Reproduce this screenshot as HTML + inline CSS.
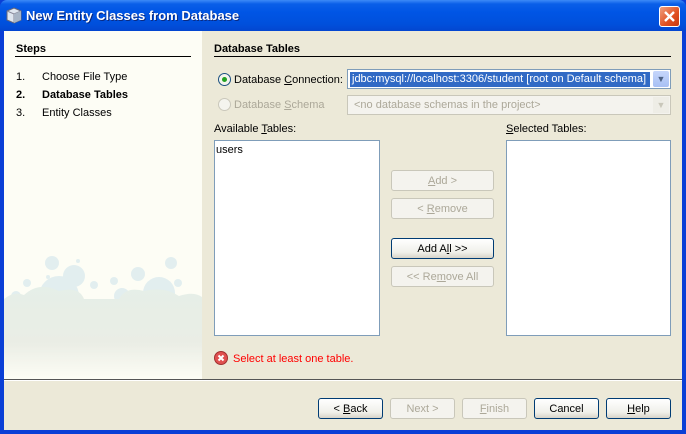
<!DOCTYPE html>
<html><head><style>
*{margin:0;padding:0;box-sizing:border-box}
body{width:686px;height:434px;overflow:hidden;font-family:"Liberation Sans",sans-serif;font-size:11px;background:#0a3fd6;position:relative}
.a{position:absolute}
#title{left:0;top:0;width:686px;height:31px;background:linear-gradient(#3d8af7 0,#0a5fe8 4px,#0055e5 12px,#0050dc 24px,#0346d0 31px);border-radius:7px 7px 0 0}
#title span{position:absolute;left:26px;top:8px;color:#fff;font-weight:bold;font-size:13px;font-family:"Liberation Sans",sans-serif;text-shadow:1px 1px #0a2a80}
#close{left:659px;top:6px;width:21px;height:21px;border:1px solid #fff;border-radius:3px;background:linear-gradient(135deg,#f0a080,#e04f20 60%,#c83810)}
#frame{left:4px;top:31px;width:678px;height:399px;background:#ece9d8}
#left{left:4px;top:31px;width:198px;height:348px;background:#fdfdf5;overflow:hidden}
.u{text-decoration:underline}
.btn{position:absolute;height:21px;border:1px solid #003c74;border-radius:3px;background:linear-gradient(#fff,#f0f0ea 70%,#d8d4c8);text-align:center;line-height:20px;color:#000}
.dis{border-color:#c9c7ba;background:#f4f3ee;color:#aca899}
.list{position:absolute;background:#fff;border:1px solid #7f9db9}
.t{margin-top:1px}
</style></head><body>
<div class="a" id="title"><svg class="a" style="left:6px;top:7px" width="16" height="17"><path d="M8 1 L15 4 L15 13 L8 16 L1 13 L1 4Z" fill="#dfe6ef" stroke="#667" stroke-width="1"/><path d="M1 4 L8 7 L15 4 M8 7 V16" fill="none" stroke="#889"/><path d="M8 7 L15 4 L15 13 L8 16Z" fill="#a8b4c4"/></svg><span>New Entity Classes from Database</span></div>
<div class="a" id="close"><svg width="19" height="19"><path d="M5 5 L14 14 M14 5 L5 14" stroke="#fff" stroke-width="2.4"/></svg></div>
<div class="a" id="frame"></div>
<div class="a" id="left">
<svg class="a" style="left:0;top:220px" width="198" height="128" opacity=".75"><defs><linearGradient id="g" x1="0" y1="0" x2="0" y2="1"><stop offset="0" stop-color="#deebe4"/><stop offset=".6" stop-color="#e4e8e0"/><stop offset="1" stop-color="#fdfdf5"/></linearGradient></defs>
<g fill="#d9eaee"><circle cx="48" cy="12" r="7"/><circle cx="70" cy="25" r="11"/><circle cx="55" cy="45" r="20"/><circle cx="23" cy="32" r="4"/><circle cx="110" cy="30" r="4"/><circle cx="134" cy="23" r="7"/><circle cx="167" cy="12" r="6"/><circle cx="155" cy="42" r="16"/><circle cx="90" cy="34" r="4"/><circle cx="174" cy="32" r="4"/><circle cx="12" cy="45" r="5"/><circle cx="118" cy="45" r="8"/><circle cx="74" cy="10" r="2"/><circle cx="44" cy="26" r="2"/></g>
<path d="M0 48 Q10 40 20 44 Q35 30 55 40 Q75 35 80 48 L115 48 Q122 35 140 40 Q160 35 175 45 Q190 40 198 46 V128 H0Z" fill="url(#g)"/></svg>
</div>
<div class="a" style="left:16px;top:43px;font-weight:bold">Steps</div>
<div class="a" style="left:15px;top:56px;width:176px;height:1px;background:#000"></div>
<div class="a" style="left:16px;top:71px">1.</div><div class="a" style="left:42px;top:71px">Choose File Type</div>
<div class="a" style="left:16px;top:89px;font-weight:bold">2.</div><div class="a" style="left:42px;top:89px;font-weight:bold">Database Tables</div>
<div class="a" style="left:16px;top:107px">3.</div><div class="a" style="left:42px;top:107px">Entity Classes</div>

<div class="a" style="left:214px;top:43px;font-weight:bold">Database Tables</div>
<div class="a" style="left:214px;top:56px;width:457px;height:1px;background:#000"></div>
<div class="a" style="left:218px;top:73px;width:13px;height:13px;border:1px solid #1c5180;border-radius:50%;background:#f4f4ee"><div class="a" style="left:3px;top:3px;width:5px;height:5px;border-radius:50%;background:#21a121"></div></div>
<div class="a" style="left:234px;top:74px">Database <span class="u">C</span>onnection:</div>
<div class="a" style="left:347px;top:69px;width:324px;height:20px;border:1px solid #7f9db9;background:#fff"><div class="a" style="left:2px;top:2px;width:300px;height:15px;background:#316ac5;color:#fff;line-height:15px;padding-left:2px;white-space:nowrap;overflow:hidden">jdbc:mysql://localhost:3306/student [root on Default schema]</div><div class="a" style="left:305px;top:1px;width:16px;height:16px;background:linear-gradient(#c6d6fb,#a8c0f4);border-radius:2px;color:#4d6185;text-align:center;font-size:9px;line-height:16px">&#9660;</div></div>
<div class="a" style="left:218px;top:98px;width:13px;height:13px;border:1px solid #cac8bb;border-radius:50%;background:#f4f4ee"></div>
<div class="a" style="left:234px;top:99px;color:#aca899">Database <span class="u">S</span>chema</div>
<div class="a" style="left:347px;top:95px;width:324px;height:20px;border:1px solid #c9c7ba;background:#f4f3ee;color:#aca899;padding:3px 0 0 6px">&lt;no database schemas in the project&gt;<div class="a" style="left:305px;top:1px;width:16px;height:16px;background:#eeede6;text-align:center;font-size:9px;line-height:16px;color:#c9c7ba">&#9660;</div></div>
<div class="a" style="left:214px;top:123px">Available <span class="u">T</span>ables:</div>
<div class="a" style="left:506px;top:123px"><span class="u">S</span>elected Tables:</div>
<div class="list" style="left:214px;top:140px;width:166px;height:196px"><div style="padding:3px 0 0 1px">users</div></div>
<div class="list" style="left:506px;top:140px;width:165px;height:196px"></div>
<div class="btn dis" style="left:391px;top:170px;width:103px"><span class="u">A</span>dd &gt;</div>
<div class="btn dis" style="left:391px;top:198px;width:103px">&lt; <span class="u">R</span>emove</div>
<div class="btn" style="left:391px;top:238px;width:103px">Add A<span class="u">l</span>l &gt;&gt;</div>
<div class="btn dis" style="left:391px;top:266px;width:103px">&lt;&lt; Re<span class="u">m</span>ove All</div>
<svg class="a" style="left:214px;top:351px" width="14" height="14"><circle cx="7" cy="7" r="6.5" fill="#e05050" stroke="#a03030"/><path d="M4.5 4.5 L9.5 9.5 M9.5 4.5 L4.5 9.5" stroke="#fff" stroke-width="2"/></svg>
<div class="a" style="left:233px;top:353px;color:#f00">Select at least one table.</div>
<div class="a" style="left:4px;top:379px;width:678px;height:1px;background:#555"></div>
<div class="a" style="left:4px;top:380px;width:678px;height:1px;background:#fff"></div>
<div class="btn" style="left:318px;top:398px;width:65px">&lt; <span class="u">B</span>ack</div>
<div class="btn dis" style="left:390px;top:398px;width:65px">Next &gt;</div>
<div class="btn dis" style="left:462px;top:398px;width:65px"><span class="u">F</span>inish</div>
<div class="btn" style="left:534px;top:398px;width:65px">Cancel</div>
<div class="btn" style="left:606px;top:398px;width:65px"><span class="u">H</span>elp</div>
</body></html>
